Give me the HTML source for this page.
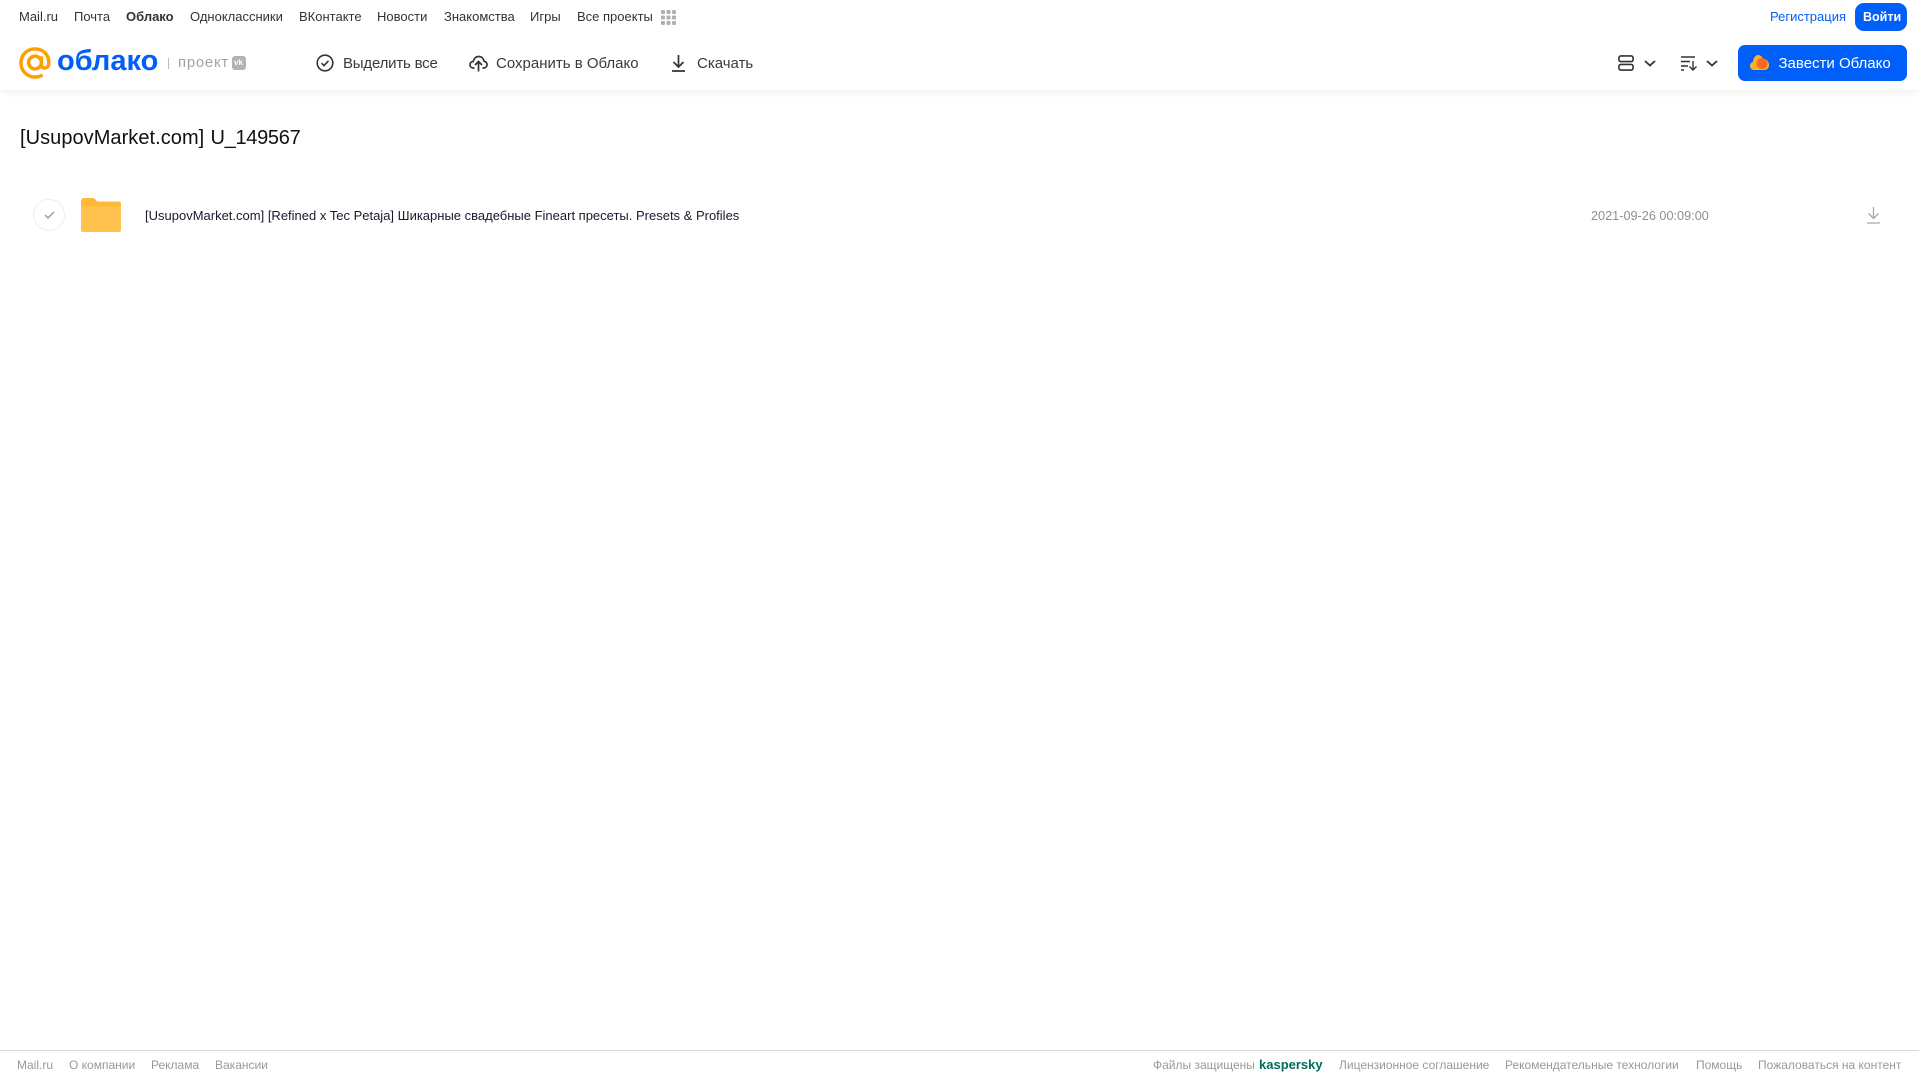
<!DOCTYPE html>
<html lang="ru">
<head>
<meta charset="utf-8">
<title>Облако</title>
<style>
html,body{margin:0;padding:0;background:#fff;}
body{width:1919px;height:1079px;position:relative;overflow:hidden;font-family:"Liberation Sans","DejaVu Sans",sans-serif;}
.t{position:absolute;white-space:nowrap;line-height:20px;}
.n{font-size:13px;color:#333;top:7px;}
.b{font-size:15px;color:#3a3a3a;top:53.5px;}
.f{font-size:12px;color:#999;top:1055px;}
svg{position:absolute;overflow:visible;}
</style>
</head>
<body>
<div style="position:absolute;left:0;top:0;width:1919px;height:90px;background:#fff;box-shadow:0 2px 8px rgba(0,0,0,.07)"></div>

<span class="t n" style="left:19px">Mail.ru</span>
<span class="t n" style="left:74px">Почта</span>
<span class="t n" style="left:126px;font-weight:bold">Облако</span>
<span class="t n" style="left:190px">Одноклассники</span>
<span class="t n" style="left:299px">ВКонтакте</span>
<span class="t n" style="left:377px">Новости</span>
<span class="t n" style="left:444px">Знакомства</span>
<span class="t n" style="left:530px">Игры</span>
<span class="t n" style="left:577px">Все проекты</span>
<svg style="left:661px;top:10px" width="15" height="15" fill="#b0b0b0">
<rect x="0" y="0" width="4" height="4" rx="1"/><rect x="5.5" y="0" width="4" height="4" rx="1"/><rect x="11" y="0" width="4" height="4" rx="1"/>
<rect x="0" y="5.5" width="4" height="4" rx="1"/><rect x="5.500" y="5.5" width="4" height="4" rx="1"/><rect x="11" y="5.5" width="4" height="4" rx="1"/>
<rect x="0" y="11" width="4" height="4" rx="1"/><rect x="5.500" y="11" width="4" height="4" rx="1"/><rect x="11" y="11" width="4" height="4" rx="1"/>
</svg>

<span class="t n" style="left:1770px;color:#005ff9">Регистрация</span>
<div style="position:absolute;left:1855px;top:3px;width:52px;height:28px;background:#005ff9;border-radius:9px"></div>
<span class="t n" style="left:1863px;color:#fff;font-weight:bold;font-size:12.500px">Войти</span>

<svg style="left:19px;top:47px" width="32" height="32" viewBox="0 0 33 33" fill="none" stroke="#ff9e00" stroke-width="3.600">
<circle cx="16.500" cy="16" r="6.600"/>
<path d="M23.100 9.500V18.500C23.100 23 30.500 23 30.700 17C31.200 7.500 24.500 2 16.500 2C8 2 2 8.500 2 16.500C2 24.500 8.500 31 16.500 31C19.500 31 22 30.200 24.200 28.800"/>
</svg>
<span class="t" style="left:57px;top:41px;font-size:29px;line-height:40px;color:#005ff9;font-weight:bold">облако</span>
<div style="position:absolute;left:168px;top:58px;width:1px;height:11px;background:#bbb"></div>
<span class="t" style="left:178px;top:53px;font-size:15px;color:#a3a3a3;letter-spacing:.7px">проект</span>
<div style="position:absolute;left:232px;top:56px;width:14px;height:14px;background:#b3b3b3;border-radius:3px"></div>
<span class="t" style="left:234px;top:53px;font-size:8px;color:#fff;font-weight:bold">vk</span>

<svg style="left:316px;top:54px" width="18" height="18" viewBox="0 0 18 18" fill="none" stroke="#333" stroke-width="1.600">
<circle cx="9" cy="9" r="7.800"/><path d="M5.500 9.200L8 11.600L12.500 6.800"/>
</svg>
<span class="t b" style="left:343px;letter-spacing:-.2px">Выделить все</span>

<svg style="left:469px;top:54px" width="19" height="18" viewBox="0 0 19 18" fill="none" stroke="#333" stroke-width="1.700">
<path d="M5.500 14H4.500C2.300 14 1 12.500 1 10.700C1 8.800 2.500 7.500 4.200 7.500C4.800 4.500 7 2.500 9.700 2.500C12.500 2.500 14.500 4.500 15 7.200C16.800 7.600 18 9 18 10.700C18 12.600 16.500 14 14.500 14H13.500"/>
<path d="M9.500 17.500V8M6 11L9.500 7.500L13 11"/>
</svg>
<span class="t b" style="left:496px">Сохранить в Облако</span>

<svg style="left:671px;top:54px" width="15" height="18" viewBox="0 0 15 18" fill="none" stroke="#333" stroke-width="1.700">
<path d="M7.500 1V12.500M2.500 8L7.500 13L12.500 8M1 17H14"/>
</svg>
<span class="t b" style="left:697px">Скачать</span>

<svg style="left:1618px;top:55px" width="16" height="16" viewBox="0 0 17 17" fill="none" stroke="#333" stroke-width="1.700">
<rect x="1" y="1" width="15" height="6" rx="2"/><rect x="1" y="10" width="15" height="6" rx="2"/>
</svg>
<svg style="left:1644px;top:60px" width="12" height="7" viewBox="0 0 12 7" fill="none" stroke="#333" stroke-width="1.800"><path d="M1 1L6 5.500L11 1"/></svg>
<svg style="left:1681px;top:56px" width="17" height="15" viewBox="0 0 17 15" fill="none" stroke="#333" stroke-width="1.400">
<path d="M0 1H14M0 5.500H9M0 10H7M0 14H3M12 5V13.500M8.500 10.500L12 14L15.500 10.500"/>
</svg>
<svg style="left:1706px;top:60px" width="12" height="7" viewBox="0 0 12 7" fill="none" stroke="#333" stroke-width="1.800"><path d="M1 1L6 5.500L11 1"/></svg>

<div style="position:absolute;left:1738px;top:45px;width:169px;height:36px;background:#005ff9;border-radius:7px"></div>
<svg style="left:1750px;top:54px" width="19" height="16" viewBox="0 0 19 16">
<path d="M4 16C1.500 16 0 14 0 11.800C0 9.800 1.200 8.500 3 8C3.300 3.500 5.500 1 8 1C10.500 1 12.500 3 13 5H15C17.500 6 19 8.500 19 11C19 14 17 16 14 16Z" fill="#ffae2b"/>
<circle cx="12" cy="9.500" r="5.500" fill="#f46d1f"/>
</svg>
<span class="t b" style="left:1778.500px;color:#fff">Завести Облако</span>

<span class="t" style="left:20px;top:125px;font-size:20px;line-height:26px;color:#111;letter-spacing:.05px">[UsupovMarket.com]</span>
<span class="t" style="left:210.500px;top:125px;font-size:20px;line-height:26px;color:#111;letter-spacing:-.3px">U_149567</span>

<div style="position:absolute;left:33px;top:199px;width:30px;height:30px;border:1px solid #eee;border-radius:50%"></div>
<svg style="left:44px;top:211px" width="11" height="8" viewBox="0 0 11 8" fill="none" stroke="#999" stroke-width="1.400"><path d="M1 4L4 7L10 1"/></svg>
<svg style="left:81px;top:198px" width="40" height="34" viewBox="0 0 40 34">
<path d="M0 3C0 1.500 1 0 3 0H11C13 0 14 .8 15 2L16 3.500H38C39.200 3.500 40 4.300 40 5.500V9H0Z" fill="#ffb93a"/>
<path d="M0 8.500H40V32C40 33.200 39.200 34 38 34H2C.8 34 0 33.200 0 32Z" fill="#ffc24f"/>
</svg>
<span class="t" style="left:145px;top:205.500px;font-size:13px;color:#1a1a2e">[UsupovMarket.com] [Refined x Tec Petaja] Шикарные свадебные Fineart пресеты. Presets &amp; Profiles</span>
<span class="t" style="left:1591px;top:205.500px;font-size:12.700px;color:#8f8f8f">2021-09-26 00:09:00</span>
<svg style="left:1867px;top:207px" width="13" height="17" viewBox="0 0 13 17" fill="none" stroke="#a6a6a6" stroke-width="1.300">
<path d="M6.500 0V11M1.500 6.500L6.500 11.500L11.500 6.500M0 16H13"/>
</svg>

<div style="position:absolute;left:0;top:1050px;width:1919px;height:1px;background:#d9d9d9"></div>
<span class="t f" style="left:17px">Mail.ru</span>
<span class="t f" style="left:69px">О компании</span>
<span class="t f" style="left:151px">Реклама</span>
<span class="t f" style="left:215px">Вакансии</span>
<span class="t f" style="left:1153px">Файлы защищены</span>
<span class="t f" style="left:1259px;color:#006d5c;font-weight:bold;font-size:13px">kaspersky</span>
<span class="t f" style="left:1339px">Лицензионное соглашение</span>
<span class="t f" style="left:1505px">Рекомендательные технологии</span>
<span class="t f" style="left:1696px">Помощь</span>
<span class="t f" style="left:1758px">Пожаловаться на контент</span>
</body>
</html>
